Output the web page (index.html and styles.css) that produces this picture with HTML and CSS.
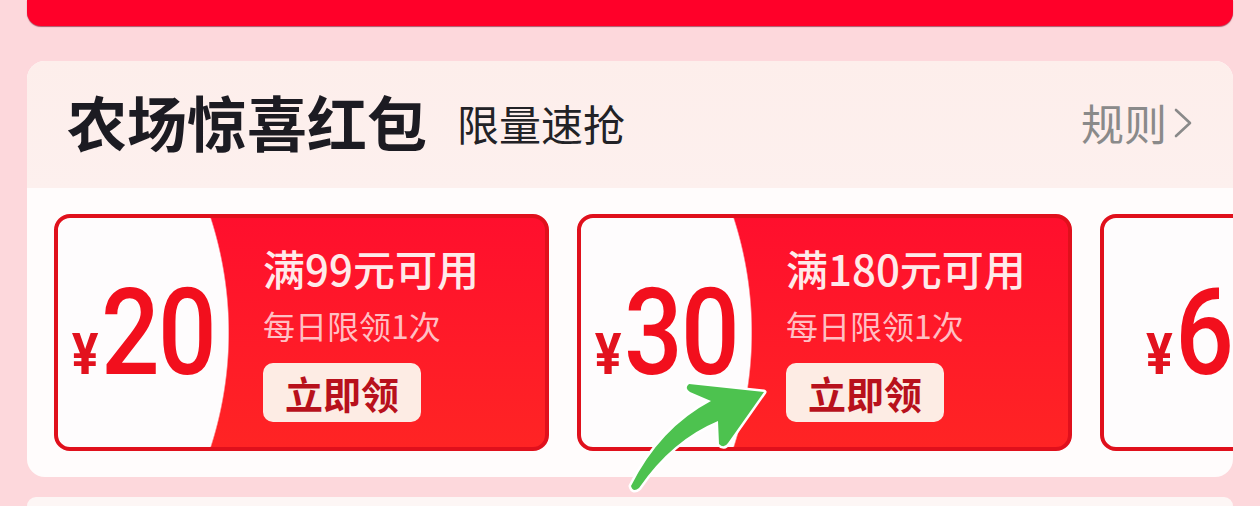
FILE: index.html
```html
<!DOCTYPE html>
<html lang="zh-CN">
<head>
<meta charset="utf-8">
<title>农场惊喜红包</title>
<link rel="stylesheet" href="styles.css">
</head>
<body>
<div class="page">
  <div class="topbar"></div>
  <section class="card">
    <header class="card-head">
      <div class="head-left">
        <h2 class="title">农场惊喜红包</h2>
        <span class="sub">限量速抢</span>
      </div>
      <a class="rule">规则<svg class="chev" viewBox="0 0 20 30" width="20" height="30"><polyline points="3,2 17,15 3,28" fill="none" stroke="#8a8a8a" stroke-width="2.6" stroke-linecap="round" stroke-linejoin="round"/></svg></a>
    </header>
    <div class="coupons">
      <div class="coupon">
        <div class="amount"><div class="amount-in"><span class="yen">¥</span><span class="num">20</span></div></div>
        <div class="info">
          <div class="cond">满99元可用</div>
          <div class="limit">每日限领1次</div>
          <button class="btn">立即领</button>
        </div>
      </div>
      <div class="coupon">
        <div class="amount"><div class="amount-in"><span class="yen">¥</span><span class="num">30</span></div></div>
        <div class="info">
          <div class="cond">满180元可用</div>
          <div class="limit">每日限领1次</div>
          <button class="btn">立即领</button>
        </div>
      </div>
      <div class="coupon">
        <div class="amount"><div class="amount-in"><span class="yen">¥</span><span class="num">6</span></div></div>
      </div>
    </div>
  </section>
  <div class="card2"></div>
  <svg class="arrow" viewBox="0 0 1260 506" width="1260" height="506">
    <path d="M764,392 L689,384 Q684,388 690,392 L711,401 Q660,428 631,486 Q633,493 639,488 Q672,440 718,421 L719,444 Q724,449 728,443 Z" fill="#4dc24f" stroke="#ffffff" stroke-width="5" stroke-linejoin="round" paint-order="stroke"/>
  </svg>
</div>
</body>
</html>
```

FILE: styles.css
```css
* {
  box-sizing: border-box;
  margin: 0;
  padding: 0;
}

body {
  width: 1260px;
  height: 506px;
  overflow: hidden;
  background: #fdd8dc;
  font-family: "Noto Sans CJK SC", "Noto Sans", sans-serif;
}

.page {
  position: relative;
  height: 506px;
  padding: 0 27px;
  overflow: hidden;
}

.topbar {
  height: 26px;
  background: #ff0029;
  border-radius: 0 0 14px 14px;
  box-shadow: 0 1px 1px rgba(120, 0, 30, 0.6);
  margin-bottom: 35px;
}

.card {
  height: 416px;
  border-radius: 18px;
  overflow: hidden;
  background: #fffcfc;
}

.card-head {
  height: 127px;
  background: linear-gradient(180deg, #fdeeeb, #fdf0ee);
  display: flex;
  align-items: center;
  justify-content: space-between;
  padding: 0 40px 8px 40px;
}

.head-left {
  display: flex;
  align-items: center;
}

.title {
  font-size: 60px;
  font-weight: 700;
  color: #1c1b22;
  line-height: 1;
}

.sub {
  font-size: 42px;
  color: #222226;
  margin-left: 30px;
  margin-top: 4px;
  line-height: 1;
}

.rule {
  display: flex;
  align-items: center;
  gap: 6px;
  font-size: 43px;
  line-height: 1;
  color: #8a8a8a;
  margin-top: 4px;
}

.coupons {
  display: flex;
  gap: 28px;
  padding: 26px 27px;
  overflow: hidden;
}

.coupon {
  flex: 0 0 495px;
  height: 237px;
  border: 4px solid #e0101c;
  border-radius: 16px;
  background:
    radial-gradient(circle 373px at -202px 50%, #fefcfd 372px, rgba(254, 252, 253, 0) 373.5px),
    linear-gradient(180deg, #ff0f2d, #ff2424);
  display: flex;
  align-items: center;
}

.amount {
  width: 171px;
  flex: none;
  display: flex;
  justify-content: center;
}

.amount-in {
  display: flex;
  align-items: baseline;
  transform: scaleX(0.86);
  font-family: Roboto, "Liberation Sans", sans-serif;
  font-weight: 500;
  line-height: 1;
  color: #f20f1d;
}

.yen {
  font-size: 58px;
  font-weight: 700;
  color: #e2121e;
  margin-right: 3px;
}

.num {
  font-size: 120px;
  letter-spacing: -2px;
}

.info {
  margin-left: 34px;
  display: flex;
  flex-direction: column;
  align-items: flex-start;
  flex: none;
}

.cond {
  font-size: 42px;
  line-height: 49px;
  font-weight: 500;
  color: #ffeaea;
  white-space: nowrap;
}

.limit {
  font-size: 32px;
  line-height: 37px;
  margin-top: 15px;
  color: #ffbfc3;
  white-space: nowrap;
}

.btn {
  margin-top: 19px;
  height: 59px;
  padding: 0 22px;
  background: #fdece4;
  border: none;
  border-radius: 10px;
  font-family: inherit;
  font-size: 38px;
  font-weight: 700;
  color: #b8111c;
  display: flex;
  align-items: center;
}

.card2 {
  margin-top: 20px;
  height: 9px;
  background: #fdf6f5;
  border-radius: 18px 18px 0 0;
}

.arrow {
  position: absolute;
  left: 0;
  top: 0;
  pointer-events: none;
}
```
